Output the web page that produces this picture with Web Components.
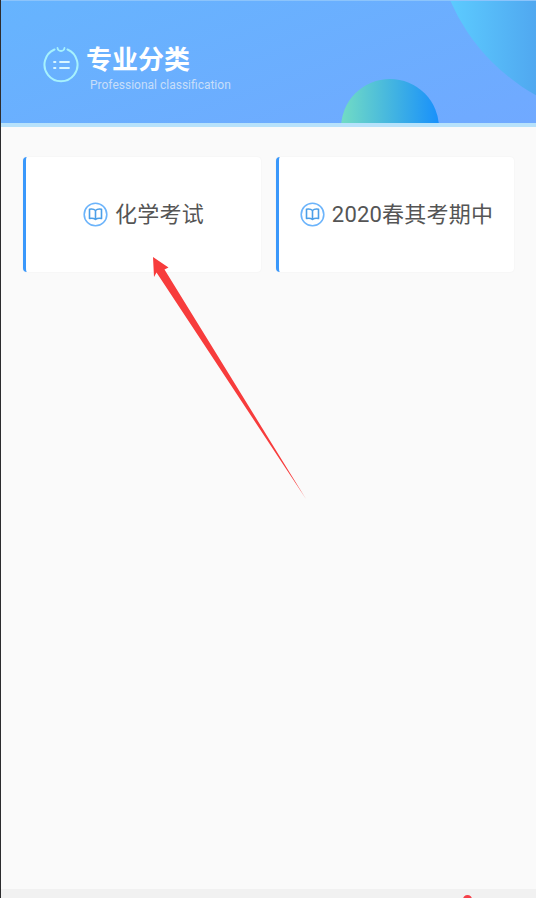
<!DOCTYPE html>
<html><head><meta charset="utf-8">
<style>
html,body{margin:0;padding:0;background:#fafafa}
body{width:536px;height:898px;overflow:hidden;font-family:Roboto,"Noto Sans CJK SC",sans-serif}
</style></head><body>
<app-page>
  <section-header title-text="专业分类" subtitle="Professional classification"></section-header>
  <category-grid>
    <category-card label="化学考试"></category-card>
    <category-card label="2020春其考期中"></category-card>
  </category-grid>
</app-page>
<script>
class AppPage extends HTMLElement{
  constructor(){
    super();
    this.attachShadow({mode:'open'}).innerHTML=`<style>
:host{display:flex;flex-direction:column;position:relative;width:536px;height:898px;background:#fafafa;overflow:hidden}
main{flex:1;display:flex;flex-direction:column}
.bottom{height:9px;background:#f1f1f1;position:relative;overflow:hidden}
.dot{position:absolute;left:463px;top:6px;width:9px;height:9px;border-radius:50%;background:#f5404a}
.edge{position:absolute;left:0;top:0;bottom:0;width:1px;background:#2c2c2e}
.arrow{position:absolute;left:0;top:0;pointer-events:none}
</style><main><slot></slot></main><div class="bottom"><div class="dot"></div></div><div class="edge"></div>
<svg class="arrow" width="536" height="898" viewBox="0 0 536 898"><path d="M153 257 L168.500 267.500 L164.500 269.500 L306 499 L156.500 272.500 L154 277 Z" fill="#f73c3c"/></svg>`;
  }
}
class SectionHeader extends HTMLElement{
  constructor(){
    super();
    const s=this.attachShadow({mode:'open'});
    s.innerHTML=`<style>
:host{display:flex;align-items:center;position:relative;box-sizing:border-box;height:127px;padding:14px 0 0 43px;gap:7px;overflow:hidden;
background:linear-gradient(160deg,#66b4fe 0%,#70a9ff 100%);border-top:1px solid #8cc4fb;border-bottom:4px solid #b7e2fb;color:#fff}
.big{position:absolute;left:434px;top:-277px;width:396px;height:396px;border-radius:50%;background:linear-gradient(90deg,#5ccbff 16px,#50a8f0 102px)}
.small{position:absolute;left:341px;top:78px;width:98px;height:98px;border-radius:50%;background:linear-gradient(90deg,#72dcc4 0%,#1890fb 100%)}
svg{flex:none;margin-bottom:8px}
.t{display:flex;flex-direction:column;position:relative}
.h{font:700 26px/24px "Noto Sans CJK SC",sans-serif}
.s{font:400 12px/14px Roboto,sans-serif;color:#c7def9;margin:8px 0 0 4px;white-space:nowrap}
</style><div class="big"></div><div class="small"></div>
<svg width="36" height="36" viewBox="0 0 36 36" fill="none" stroke="#a6f1fd" stroke-width="2" stroke-linecap="round"><path d="M11.500 2.500A16.500 16.500 0 1 0 24.500 2.500"/><path d="M14.500 1C15 5 21 5 21.500 1" stroke-width="1.800"/><path d="M11 15h1.500M17 15h9M11 21h1.500M17 21h9" stroke="#d8f6ff" stroke-width="1.800"/></svg>
<div class="t"><div class="h"></div><div class="s"></div></div>`;
  }
  connectedCallback(){
    this.shadowRoot.querySelector('.h').textContent=this.getAttribute('title-text');
    this.shadowRoot.querySelector('.s').textContent=this.getAttribute('subtitle');
  }
}
class CategoryGrid extends HTMLElement{
  constructor(){
    super();
    this.attachShadow({mode:'open'}).innerHTML=`<style>
:host{display:grid;grid-template-columns:238px 238px;gap:15px;padding:30px 22px 0 23px}
</style><slot></slot>`;
  }
}
class CategoryCard extends HTMLElement{
  constructor(){
    super();
    const s=this.attachShadow({mode:'open'});
    s.innerHTML=`<style>
:host{display:flex;align-items:center;justify-content:center;gap:7px;box-sizing:border-box;height:115px;background:#fff;border-left:3px solid #3a98fb;border-radius:4px;box-shadow:0 0 2px rgba(0,0,0,.06);color:#555}
span{font:400 22px/28px Roboto,"Noto Sans CJK SC",sans-serif;letter-spacing:.2px;white-space:nowrap}
svg{flex:none}
</style><svg width="25" height="25" viewBox="0 0 25 25" fill="none" stroke="#6cb4fb"><circle cx="12.500" cy="12.500" r="11.300" stroke-width="1.600"/><path d="M12.500 8.500C11 7 8.500 6.800 6.500 7.200V16.500C8.500 16 11 16.300 12.500 17.500C14 16.300 16.500 16 18.500 16.500V7.200C16.500 6.800 14 7 12.500 8.500ZM12.500 8.500V17.500" stroke="#4c9fe8" stroke-width="1.600" stroke-linejoin="round"/></svg><span></span>`;
  }
  connectedCallback(){
    this.shadowRoot.querySelector('span').textContent=this.getAttribute('label');
  }
}
customElements.define('app-page',AppPage);
customElements.define('section-header',SectionHeader);
customElements.define('category-grid',CategoryGrid);
customElements.define('category-card',CategoryCard);
</script>
</body></html>
